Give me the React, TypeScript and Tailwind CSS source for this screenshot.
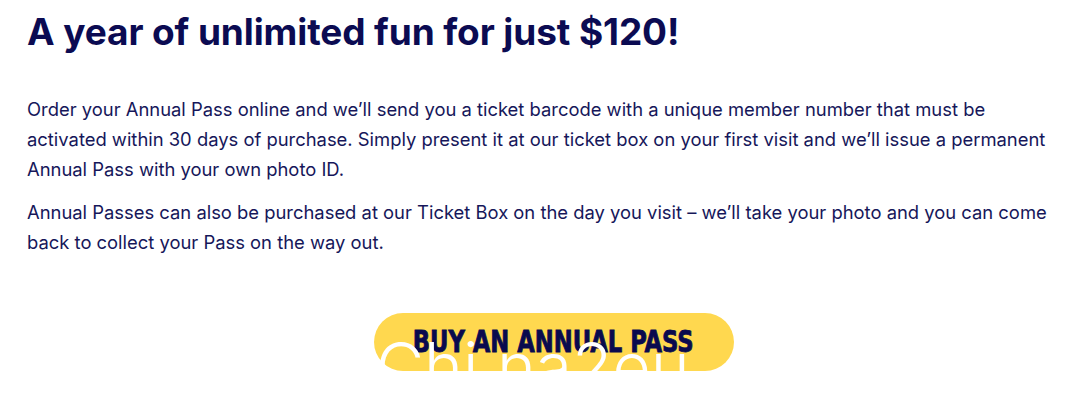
import React from 'react';

const App = () => {
  return (
    <div className="relative w-[1080px] h-[401px] overflow-hidden bg-white pl-[27px] pt-[8px]" style={{ fontFamily: 'Inter, "Noto Sans", sans-serif' }}>
      <h1 className="text-[37px] leading-[48px] font-bold text-[#0b0b52] tracking-[-0.1px]">
        A year of unlimited fun for just $120!
      </h1>

      <div className="mt-[38px] pr-[24px] text-[18.4px] leading-[30px] text-[#16175a]">
        <p>
          Order your Annual Pass online and we’ll send you a ticket barcode with a unique member number that must be
          activated within 30 days of purchase. Simply present it at our ticket box on your first visit and we’ll issue a permanent
          Annual Pass with your own photo ID.
        </p>
        <p className="mt-[13px]">
          Annual Passes can also be purchased at our Ticket Box on the day you visit – we’ll take your photo and you can come
          back to collect your Pass on the way out.
        </p>
      </div>

      <div className="mt-[56px] flex justify-center">
        <a
          href="#"
          className="flex h-[58px] w-[360px] items-center justify-center rounded-full bg-[#ffd84f] text-[#0a0a4e]"
        >
          <span
            className="inline-block scale-x-[0.84] whitespace-nowrap text-[30px] font-bold uppercase leading-none [-webkit-text-stroke:0.8px_#0a0a4e]"
            style={{ fontFamily: '"DejaVu Sans Condensed", "Liberation Sans Narrow", sans-serif' }}
          >
            Buy an annual pass
          </span>
        </a>
      </div>

      <div
        className="pointer-events-none absolute left-[376px] top-[333px] whitespace-nowrap text-[66px] font-light leading-none text-white"
        style={{ fontFamily: 'Inter, sans-serif' }}
      >
        Chi na2eu
      </div>
    </div>
  );
};

export default App;
